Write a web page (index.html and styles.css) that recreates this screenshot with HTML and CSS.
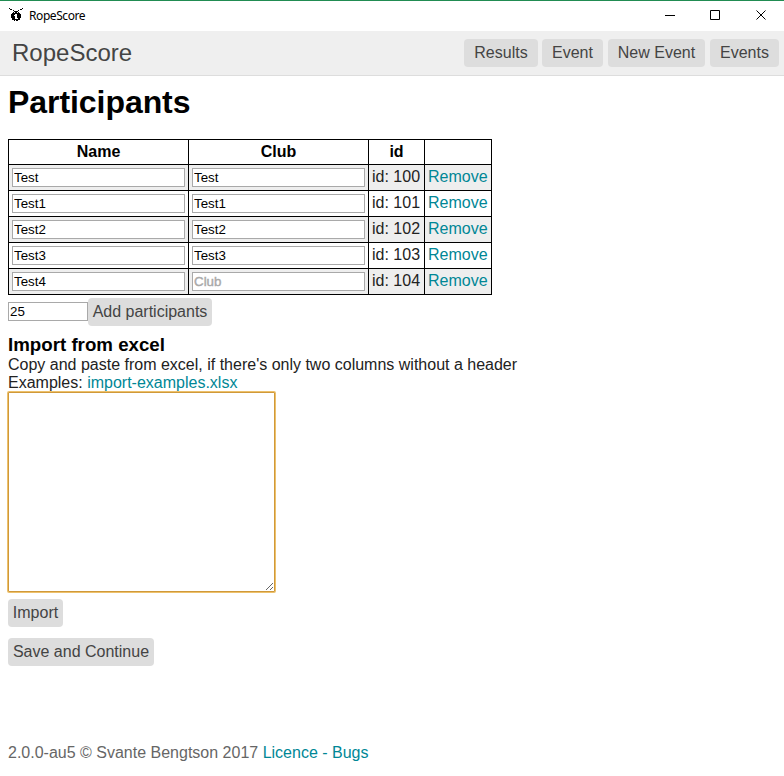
FILE: index.html
```
<!DOCTYPE html>
<html lang="en">
<head>
<meta charset="utf-8">
<title>RopeScore</title>
<link rel="stylesheet" href="styles.css">
</head>
<body>
<div class="titlebar">
  <svg class="logo" width="16" height="16" viewBox="0 0 16 16" shape-rendering="crispEdges"><path d="M1 1h1v1h-1zM2 2h2v1h-2zM5 3h1v1h-1zM14 1h1v1h-1zM12 2h2v1h-2zM10 3h1v1h-1zM6 4h4v1h1v1h1v1h1v4h-1v1h-1v1h-1v1h-4v-1h-1v-1h-1v-1h-1v-4h1v-1h1v-1h1zM4 12h1v1h-1zM11 12h1v1h-1z"/><path fill="#fff" d="M7 7h2v4h1v1h-3v-3h-1v-1h1zM6 5h1v1h-1zM9 5h1v1h-1zM7 13h1v1h-1z"/></svg>
  <span class="title">RopeScore</span>
  <svg class="controls" width="100" height="12" viewBox="0 0 100 12" fill="none" stroke="#000"><path d="M0 6.5h10M45.500 1.500h9v9h-9zM91.500 1.500l9 9M100.500 1.500l-9 9"/></svg>
</div>
<header>
  <a class="brand">RopeScore</a>
  <nav><a class="button results">Results</a><a class="button event">Event</a><a class="button new-event">New Event</a><a class="button events">Events</a></nav>
</header>
<main>
  <h1>Participants</h1>
  <table>
    <colgroup><col class="wide"><col class="wide"><col class="id"><col class="action"></colgroup>
    <thead><tr><th>Name</th><th>Club</th><th>id</th><th></th></tr></thead>
    <tbody>
      <tr><td><input value="Test"></td><td><input value="Test"></td><td>id: 100</td><td><a>Remove</a></td></tr>
      <tr><td><input value="Test1"></td><td><input value="Test1"></td><td>id: 101</td><td><a>Remove</a></td></tr>
      <tr><td><input value="Test2"></td><td><input value="Test2"></td><td>id: 102</td><td><a>Remove</a></td></tr>
      <tr><td><input value="Test3"></td><td><input value="Test3"></td><td>id: 103</td><td><a>Remove</a></td></tr>
      <tr><td><input value="Test4"></td><td><input placeholder="Club"></td><td>id: 104</td><td><a>Remove</a></td></tr>
    </tbody>
  </table>
  <div class="add"><input value="25"><a class="button add-button">Add participants</a></div>
  <h3>Import from excel</h3>
  <p>Copy and paste from excel, if there's only two columns without a header<br>Examples: <a>import-examples.xlsx</a></p>
  <textarea></textarea>
  <a class="button import">Import</a>
  <a class="button save">Save and Continue</a>
</main>
<footer>2.0.0-au5 © Svante Bengtson 2017 <a>Licence</a> <a>-</a> <a>Bugs</a></footer>
</body>
</html>
```
FILE: styles.css
```
* { box-sizing: border-box; }
body {
  margin: 0;
  height: 776px;
  overflow: hidden;
  display: flex;
  flex-direction: column;
  background: #fff;
  color: #222;
  font: 16px/18px "Liberation Sans", Arial, sans-serif;
}
a { color: #008796; text-decoration: none; }
.titlebar {
  display: flex;
  flex: none;
  height: 31px;
  border-top: 1px solid #218c52;
  padding: 0 18px 0 8px;
}
.logo { margin-top: 6px; }
.title {
  margin: 6px auto 0 5px;
  color: #000;
  font: 12px/18px "Noto Sans", "Open Sans", sans-serif;
  letter-spacing: -0.42px;
}
.controls { margin-top: 8px; overflow: visible; margin-right: 1px; }
header {
  display: flex;
  flex: none;
  justify-content: space-between;
  height: 45px;
  padding: 8px 5px 0 12px;
  background: #efefef;
  border-bottom: 1px solid #ddd;
}
.brand { color: #444; font-size: 24px; line-height: 28px; }
nav { display: flex; }
.button {
  display: block;
  height: 28px;
  border-radius: 4px;
  background: #ddd;
  color: #444;
  line-height: 27px;
  text-align: center;
  white-space: nowrap;
}
.results { width: 74px; margin-right: 4px; }
.event { width: 61px; margin-right: 5px; }
.new-event { width: 97px; margin-right: 5px; }
.events { width: 69px; }
main { padding: 8px 8px 0; }
h1 { margin: 0 0 18px; color: #000; font-size: 32px; line-height: 37px; letter-spacing: -0.06px; }
table { width: 484px; table-layout: fixed; border-collapse: collapse; }
.wide { width: 180px; }
.id { width: 56px; }
.action { width: 67px; }
th, td { border: 1px solid #000; padding: 0 3px; white-space: nowrap; }
th { height: 25px; color: #000; }
td { height: 26px; padding-bottom: 1px; }
tbody tr:nth-child(odd) { background: #eee; }
input {
  display: block;
  width: 173px;
  height: 19px;
  margin: 0;
  border: 1px solid #a9a9a9;
  padding: 1px;
  background: #fff;
  color: #000;
  font: 13.333px "Liberation Sans", Arial, sans-serif;
}
td input { position: relative; top: 0.5px; }
input::placeholder { color: #a9a9a9; opacity: 1; -webkit-text-stroke: 0.4px #a9a9a9; }
.add { display: flex; margin-top: 3px; }
.add input { width: 80px; margin-top: 4px; }
.add-button { width: 124px; }
h3 { margin: 8px 0 0; color: #000; font-size: 18.72px; line-height: 22px; }
p { margin: 0; height: 36px; }
textarea {
  display: block;
  width: 267px;
  height: 200px;
  margin: 0 0 7px;
  border: 1px solid #d0993a;
  outline: none;
  border-radius: 1px;
  box-shadow: 0 0 0 1px #edc16c;
}
.import { width: 55px; margin-bottom: 11px; }
.save { width: 146px; }
footer { margin: auto 8px 14px; color: #666; }
```
